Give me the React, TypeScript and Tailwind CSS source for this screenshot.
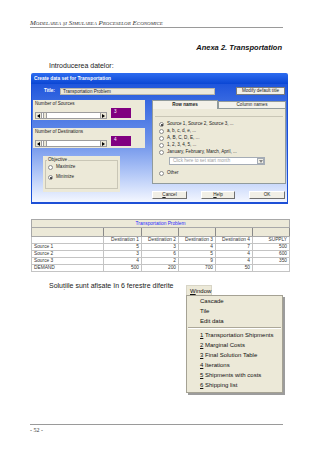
import React from "react";

const rows = [
  { name: "Source 1", vals: ["5", "3", "4", "7", "500"] },
  { name: "Source 2", vals: ["3", "6", "5", "4", "600"] },
  { name: "Source 3", vals: ["4", "2", "9", "4", "350"] },
  { name: "DEMAND", vals: ["500", "200", "700", "50", ""] },
];

const menuItems = [
  { key: "1", text: "Transportation Shipments" },
  { key: "2", text: "Marginal Costs" },
  { key: "3", text: "Final Solution Table" },
  { key: "4", text: "Iterations" },
  { key: "5", text: "Shipments with costs" },
  { key: "6", text: "Shipping list" },
];

function Radio({ checked, label }: { checked?: boolean; label: string }) {
  return (
    <div className="flex items-center gap-[3px] h-[7px]">
      <span className="w-[5px] h-[5px] rounded-full bg-white border border-[#8a8a8a] flex items-center justify-center shrink-0">
        {checked && <span className="w-[2px] h-[2px] rounded-full bg-[#1a1a1a]" />}
      </span>
      <span className="whitespace-nowrap">{label}</span>
    </div>
  );
}

function Arrow({ dir }: { dir: "l" | "r" }) {
  return (
    <svg width="3" height="4" viewBox="0 0 3 4">
      <path d={dir === "l" ? "M3 0 L0 2 L3 4 Z" : "M0 0 L3 2 L0 4 Z"} fill="#000" />
    </svg>
  );
}

function ScrollBar() {
  return (
    <div className="flex h-[7px] w-[72px] bg-white border border-[#9d9d9d]">
      <div className="w-[6px] bg-[#ece9d8] border-r border-[#9d9d9d] flex items-center justify-center">
        <Arrow dir="l" />
      </div>
      <div className="w-[4px] ml-[1px] bg-[#ece9d8] border-x border-[#9d9d9d]" />
      <div className="flex-1" />
      <div className="w-[6px] bg-[#ece9d8] border-l border-[#9d9d9d] flex items-center justify-center">
        <Arrow dir="r" />
      </div>
    </div>
  );
}

function NumBox({ title, value }: { title: string; value: string }) {
  return (
    <div className="h-[20px] w-[112px] bg-[#ece9d8] pl-[2px] pt-[1px]">
      <div className="leading-[6px] text-[#222]">{title}</div>
      <div className="flex items-start gap-[4px] mt-[1px]">
        <div className="mt-[4px]">
          <ScrollBar />
        </div>
        <div className="w-[20px] h-[10px] bg-[#800080] text-white pl-[3px] pt-[1px] leading-[6px]">{value}</div>
      </div>
    </div>
  );
}

function Btn({ w, children }: { w: string; children: React.ReactNode }) {
  return (
    <div
      className={`${w} h-[8px] bg-[#f1efe6] border border-t-white border-l-white border-r-[#6f6f6f] border-b-[#6f6f6f] flex items-center justify-center leading-[6px] text-[#222]`}
    >
      {children}
    </div>
  );
}

export default function App() {
  return (
    <div className="w-[320px] h-[453px] bg-white overflow-hidden flex flex-col pl-[30px] font-['Liberation_Sans',Arial,sans-serif] text-[#222]">
      <div className="mt-[19px] w-[253px] h-[9px] border-b border-[#9a9a9a] font-['Liberation_Serif','Times_New_Roman',serif] italic [font-variant:small-caps] text-[7px] leading-[8px] text-[#333]">
        Modelarea şi Simularea Proceselor Economice
      </div>

      <div className="mt-[15px] w-[252px] h-[10px] text-right font-bold italic text-[7.5px] leading-[10px] text-[#111]">
        Anexa 2. Transportation
      </div>

      <div className="mt-[8px] ml-[19px] h-[10px] text-[7px] leading-[10px] text-[#222]">Introducerea datelor:</div>

      {/* dialog */}
      <div className="mt-[2px] ml-[1px] w-[257px] h-[131px] flex flex-col text-[4.6px]">
        <div className="h-[11px] rounded-t-[2px] bg-gradient-to-b from-[#2d6cf0] to-[#0a46d4] text-white font-bold pl-[3px] leading-[11px] text-[4.8px]">
          Create data set for Transportation
        </div>
        <div className="flex-1 flex flex-col bg-gradient-to-b from-[#1f55dc] via-[#6f93ea] to-[#f4f7ff] border-x border-[#1a4fd6] border-b-2 border-b-[#1d4fd6]">
          <div className="flex items-center mt-[3px] h-[8px]">
            <span className="ml-[12px] w-[16px] text-white font-bold">Title:</span>
            <div className="w-[155px] h-[7px] bg-[#ebe8dc] border border-[#b9b6a8] pl-[2px] leading-[5px]">
              Transportation Problem
            </div>
            <div className="ml-[21px] w-[49px] h-[8px] bg-[#f3f1ea] border border-[#7b7b7b] flex items-center justify-center leading-[6px]">
              Modify default title
            </div>
          </div>

          <div className="flex mt-[5px]">
            {/* left column */}
            <div className="ml-[1px] w-[112px] flex flex-col">
              <NumBox title="Number of Sources" value="3" />
              <div className="mt-[8px]">
                <NumBox title="Number of Destinations" value="4" />
              </div>
              <div className="mt-[8px] ml-[10px] w-[77px] h-[36px] bg-[#ece9d8] px-[2px]">
                <fieldset className="border border-[#c9c6b6] h-[32px] mt-[1px] pl-[2px]">
                  <legend className="px-[1px] leading-[6px] ml-[-1px]">Objective</legend>
                  <div className="mt-[1px] flex flex-col gap-[3px]">
                    <Radio label="Maximize" />
                    <Radio checked label="Minimize" />
                  </div>
                </fieldset>
              </div>
            </div>

            {/* right column */}
            <div className="ml-[7px] w-[134px] flex flex-col">
              <div className="flex h-[9px] items-end">
                <div className="w-[66px] h-[9px] bg-[#f3f1e8] border-t border-x border-[#919b9c] flex items-center justify-center font-bold">
                  Row names
                </div>
                <div className="w-[68px] h-[8px] bg-[#f3f2ec] border border-[#919b9c] flex items-center justify-center">
                  Column names
                </div>
              </div>
              <div className="h-[75px] bg-[#ece9d8] border border-[#919b9c] border-t-0 px-[2px]">
                <div className="mt-[7px] border-t border-[#c9c6b6] pl-[4px] pt-[4px] flex flex-col">
                  <Radio checked label="Source 1, Source 2, Source 3, ..." />
                  <Radio label="a, b, c, d, e, ..." />
                  <Radio label="A, B, C, D, E, ..." />
                  <Radio label="1, 2, 3, 4, 5, ..." />
                  <Radio label="January, February, March, April, ..." />
                  <div className="ml-[10px] mt-[1px] w-[96px] h-[8px] bg-white border border-[#a5acb5] flex items-center">
                    <span className="flex-1 pl-[3px] text-[#a0a0a0] leading-[6px]">Click here to set start month</span>
                    <span className="w-[7px] h-[6px] mr-[0px] border border-[#a5acb5] bg-[#f1efe6] flex items-center justify-center">
                      <svg width="4" height="3" viewBox="0 0 4 3">
                        <path d="M0 0 L4 0 L2 3 Z" fill="#888" />
                      </svg>
                    </span>
                  </div>
                  <div className="mt-[5px]">
                    <Radio label="Other" />
                  </div>
                </div>
              </div>
              <div className="flex mt-[7px] items-center">
                <Btn w="w-[35px]">
                  <span className="underline">C</span>ancel
                </Btn>
                <div className="ml-[14px]">
                  <Btn w="w-[34px]">
                    <span className="underline">H</span>elp
                  </Btn>
                </div>
                <div className="ml-[14px]">
                  <Btn w="w-[36px]">OK</Btn>
                </div>
              </div>
            </div>
          </div>
        </div>
      </div>

      {/* table */}
      <table className="mt-[15px] ml-[1px] w-[258px] table-fixed border-collapse text-[4.8px] text-[#333]">
        <colgroup>
          <col className="w-[72px]" />
          <col className="w-[38px]" />
          <col className="w-[37px]" />
          <col className="w-[37px]" />
          <col className="w-[37px]" />
          <col className="w-[37px]" />
        </colgroup>
        <tbody>
          <tr className="h-[8px] bg-[#ece9d8]">
            <td colSpan={6} className="border border-[#a8a8a8] text-center text-[#2a2aff] leading-[6px] p-0">
              Transportation Problem
            </td>
          </tr>
          <tr className="h-[9px] bg-[#ece9d8]">
            {[0, 1, 2, 3, 4, 5].map((i) => (
              <td key={i} className="border border-[#a8a8a8] border-r-[#8a8a8a] p-0" />
            ))}
          </tr>
          <tr className="h-[7px]">
            <td className="border border-[#c4c4c4] p-0" />
            {["Destination 1", "Destination 2", "Destination 3", "Destination 4", "SUPPLY"].map((h) => (
              <td key={h} className="border border-[#c4c4c4] text-right pr-[2px] leading-[6px] p-0 whitespace-nowrap">
                {h}
              </td>
            ))}
          </tr>
          {rows.map((r) => (
            <tr key={r.name} className="h-[7px]">
              <td className="border border-[#c4c4c4] pl-[2px] leading-[6px]">{r.name}</td>
              {r.vals.map((v, i) => (
                <td key={i} className="border border-[#c4c4c4] text-right pr-[2px] leading-[6px]">
                  {v}
                </td>
              ))}
            </tr>
          ))}
        </tbody>
      </table>

      {/* solutions + window menu */}
      <div className="flex items-start w-[253px]">
        <div className="mt-[9px] ml-[19px] text-[7px] leading-[10px] whitespace-nowrap">
          Soluțiile sunt afișate în 6 ferestre diferite
        </div>
        <div className="ml-auto mt-[13px] flex flex-col text-[6px] text-[#111]">
          <div className="w-[26px] h-[10px] bg-[#ece9d8] border-x border-t border-[#d8d5c6] pl-[3px] leading-[10px]">
            <span className="underline">W</span>indow
          </div>
          <div className="w-[97px] bg-[#ece9d8] border border-[#a5a294] shadow-[2px_2px_0_#9c9c9c] pb-[2px]">
            {["Cascade", "Tile", "Edit data"].map((t) => (
              <div key={t} className="h-[10px] leading-[10px] pl-[13px]">
                {t}
              </div>
            ))}
            <div className="h-[4px] flex items-center px-[1px]">
              <div className="w-full border-t border-[#aca899] border-b border-b-white" />
            </div>
            {menuItems.map((m) => (
              <div key={m.key} className="h-[10px] leading-[10px] pl-[13px] whitespace-nowrap">
                <span className="underline">{m.key}</span> {m.text}
              </div>
            ))}
          </div>
        </div>
      </div>

      <div className="mt-[31px] w-[253px] border-t border-[#9a9a9a]" />
      <div className="mt-[1px] font-['Liberation_Serif','Times_New_Roman',serif] text-[6px] leading-[8px] text-[#333]">
        - 52 -
      </div>
    </div>
  );
}
